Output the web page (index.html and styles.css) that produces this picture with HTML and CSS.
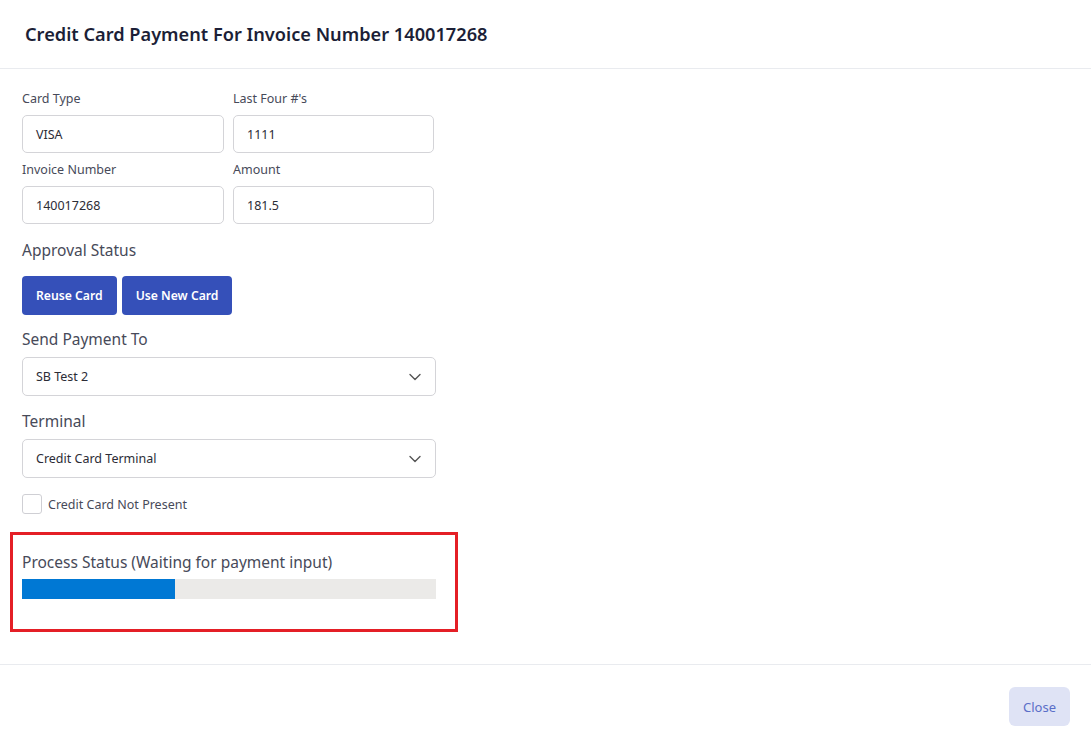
FILE: index.html
```html
<!DOCTYPE html>
<html>
<head>
<meta charset="utf-8">
<link rel="stylesheet" href="styles.css">
</head>
<body>
<div class="modal">
  <header class="modal-header">
    <h1 class="title">Credit Card Payment For Invoice Number 140017268</h1>
  </header>
  <main class="modal-body">
    <div class="grid">
      <div class="field">
        <label class="lbl">Card Type</label>
        <div class="input">VISA</div>
      </div>
      <div class="field">
        <label class="lbl">Last Four #'s</label>
        <div class="input">1111</div>
      </div>
      <div class="field">
        <label class="lbl">Invoice Number</label>
        <div class="input">140017268</div>
      </div>
      <div class="field">
        <label class="lbl">Amount</label>
        <div class="input">181.5</div>
      </div>
    </div>
    <div class="section-title approval">Approval Status</div>
    <div class="buttons">
      <button class="btn">Reuse Card</button>
      <button class="btn">Use New Card</button>
    </div>
    <div class="section-title send">Send Payment To</div>
    <div class="select">
      <span>SB Test 2</span>
      <svg class="chev" width="12" height="8" viewBox="0 0 12 8"><path d="M1 1.5l5 5 5-5" fill="none" stroke="#555" stroke-width="1.4" stroke-linecap="round" stroke-linejoin="round"/></svg>
    </div>
    <div class="section-title terminal">Terminal</div>
    <div class="select">
      <span>Credit Card Terminal</span>
      <svg class="chev" width="12" height="8" viewBox="0 0 12 8"><path d="M1 1.5l5 5 5-5" fill="none" stroke="#555" stroke-width="1.4" stroke-linecap="round" stroke-linejoin="round"/></svg>
    </div>
    <div class="check-row">
      <span class="checkbox"></span>
      <span class="check-label">Credit Card Not Present</span>
    </div>
    <div class="status-box">
      <div class="section-title status">Process Status (Waiting for payment input)</div>
      <div class="progress"><div class="progress-fill" style="width:37%"></div></div>
    </div>
  </main>
  <footer class="modal-footer">
    <button class="close">Close</button>
  </footer>
</div>
</body>
</html>
```
FILE: styles.css
```css
html, body {
  margin: 0;
  padding: 0;
  background: #ffffff;
}
body {
  font-family: "Noto Sans", "Open Sans", sans-serif;
  color: #3d3d4e;
  width: 1091px;
  height: 747px;
  overflow: hidden;
}
.modal {
  display: flex;
  flex-direction: column;
  height: 747px;
}
.modal-header {
  height: 69px;
  border-bottom: 1px solid #e9ebef;
  display: flex;
  align-items: center;
  padding-left: 25px;
  box-sizing: border-box;
}
.title {
  margin: 0;
  font-size: 18.2px;
  font-weight: 600;
  color: #1c1f37;
}
.modal-body {
  padding: 21px 22px 0 22px;
  height: 596px;
  box-sizing: border-box;
  border-bottom: 1px solid #e9ebef;
}
.grid {
  display: grid;
  grid-template-columns: 202px 201px;
  column-gap: 9px;
  row-gap: 8px;
}
.field {
  display: flex;
  flex-direction: column;
}
.lbl {
  font-size: 12.5px;
  color: #474a59;
  line-height: 17px;
  margin-bottom: 8px;
}
.input {
  height: 38px;
  box-sizing: border-box;
  border: 1px solid #d4d4d8;
  border-radius: 5px;
  padding: 0 13px;
  display: flex;
  align-items: center;
  font-size: 12.5px;
  color: #2c2c36;
}
.section-title {
  font-size: 15.5px;
  color: #474a59;
  line-height: 20px;
}
.approval { margin-top: 16px; }
.buttons {
  display: flex;
  gap: 5px;
  margin-top: 16px;
}
.btn {
  height: 39px;
  border: 0;
  border-radius: 4px;
  background: #3550b9;
  color: #ffffff;
  font-family: inherit;
  font-weight: 600;
  font-size: 12.2px;
  padding: 0 14px;
}
.send { margin-top: 14px; }
.terminal { margin-top: 15px; }
.select {
  margin-top: 8px;
  width: 414px;
  height: 39px;
  box-sizing: border-box;
  border: 1px solid #d4d4d8;
  border-radius: 5px;
  padding: 0 14px 0 13px;
  display: flex;
  align-items: center;
  justify-content: space-between;
  font-size: 12.5px;
  color: #2c2c36;
}
.check-row {
  margin-top: 16px;
  display: flex;
  align-items: center;
  gap: 6px;
}
.checkbox {
  width: 20px;
  height: 20px;
  box-sizing: border-box;
  border: 1px solid #cfcfd4;
  border-radius: 3px;
}
.check-label {
  font-size: 12.5px;
  color: #474a59;
}
.status-box {
  margin: 18px 0 0 -12px;
  width: 448px;
  height: 100px;
  box-sizing: border-box;
  border: 3px solid #e41f26;
  padding: 15px 0 0 9px;
}
.status { line-height: 24px; }
.progress {
  margin-top: 5px;
  width: 414px;
  height: 20px;
  background: #ebeae8;
}
.progress-fill {
  height: 100%;
  background: #0078d4;
}
.modal-footer {
  flex: 1;
  display: flex;
  justify-content: flex-end;
  align-items: flex-start;
  padding: 22px 21px 0 0;
}
.close {
  height: 39px;
  width: 61px;
  border: 0;
  border-radius: 6px;
  background: #dfe3f5;
  color: #5a6ec8;
  font-family: inherit;
  font-size: 13px;
}
```
